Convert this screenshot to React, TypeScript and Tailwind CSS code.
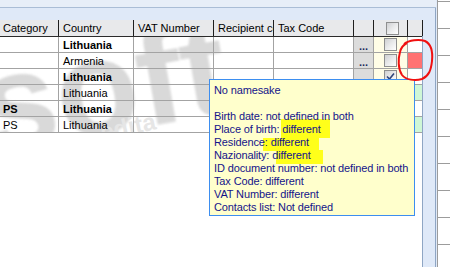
import React from "react"

const cols = [59, 75, 80, 60, 80, 20, 34, 15]

interface Row {
    category: string
    country: string
    bold: boolean
    checked: boolean
    mark: "" | "red" | "green"
}

const rows: Row[] = [
    { category: "", country: "Lithuania", bold: true, checked: false, mark: "" },
    { category: "", country: "Armenia", bold: false, checked: false, mark: "red" },
    { category: "", country: "Lithuania", bold: true, checked: true, mark: "" },
    { category: "", country: "Lithuania", bold: false, checked: true, mark: "green" },
    { category: "PS", country: "Lithuania", bold: true, checked: true, mark: "" },
    { category: "PS", country: "Lithuania", bold: false, checked: true, mark: "green" },
]

const Checkbox = ({ checked }: { checked?: boolean }) => (
    <div className="relative h-[13px] w-[13px] border border-[#8e8f8f] bg-gradient-to-br from-[#cfd0d2] via-[#e9eaeb] to-white">
        {checked && (
            <svg className="absolute left-0 top-0" width="11" height="11" viewBox="0 0 11 11">
                <path d="M2 5.5 L4.5 8 L9 2.5" fill="none" stroke="#31457a" strokeWidth="1.6" />
            </svg>
        )}
    </div>
)

const Tooltip = () => {
    const lines = [
        "No namesake",
        "",
        "Birth date: not defined in both",
        "Place of birth: different",
        "Residence: different",
        "Nazionality: different",
        "ID document number: not defined in both",
        "Tax Code: different",
        "VAT Number: different",
        "Contacts list: Not defined",
    ]
    return (
        <div className="absolute left-[209px] top-[79px] z-20 h-[137px] w-[206px] border border-[#3d8ef0] bg-[#ffffcc] pl-[4px] pt-[4px] tracking-[-0.13px] text-[#14148a]">
            <div className="absolute left-[71px] top-[39px] h-[19px] w-[49px] bg-[#ffff1a]" />
            <div className="absolute left-[53px] top-[58px] h-[13px] w-[56px] bg-[#ffff1a]" />
            <div className="absolute left-[66px] top-[70px] h-[14px] w-[47px] bg-[#ffff1a]" />
            <div className="relative">
                {lines.map((l, i) => (
                    <div key={i} className="h-[13px] whitespace-nowrap leading-[13px]">{l}</div>
                ))}
            </div>
        </div>
    )
}

const App = () => {
    const headers = ["Category", "Country", "VAT Number", "Recipient code", "Tax Code", "", "", ""]

    return (
        <div className="relative flex h-[267px] w-[450px] overflow-hidden bg-white font-['Liberation_Sans',Arial,sans-serif] text-[11px] text-black">
            <div className="flex w-[436px] flex-col bg-[#dfe9f8]">
                <div className="h-[8px] border-b border-[#aabdd6] bg-[#e7eef8]" />
                <div className="flex flex-1 border-r border-[#8fa6c4] pt-[12px]">
                    <div className="relative flex w-[423px] flex-col border-r border-[#8fa6c4] bg-white">
                        {/* header */}
                        <div className="flex h-[17px] border-b border-[#2b2b2b] bg-[#e8e9eb]">
                            {headers.map((h, i) => (
                                <div
                                    key={i}
                                    style={{ width: cols[i] }}
                                    className={`flex shrink-0 items-center overflow-hidden whitespace-nowrap border-r border-[#1e1e1e] ${i === 0 ? "pl-[3px]" : "pl-[4px]"} ${i === 6 ? "justify-center pl-0" : ""}`}
                                >
                                    {i === 6 ? <Checkbox /> : h}
                                </div>
                            ))}
                        </div>

                        {/* body */}
                        <div className="relative overflow-hidden">
                            <div className="pointer-events-none absolute left-[-20px] top-[-18px] -rotate-[10deg] select-none text-[135px] font-bold leading-none text-[#d9d9d9] blur-[0.8px]">
                                soft
                            </div>
                            <div className="pointer-events-none absolute left-[100px] top-[78px] -rotate-[12deg] select-none text-[24px] font-bold leading-none text-[#e6e6e6]">
                                edita
                            </div>
                            {rows.map((r, ri) => (
                                <div key={ri} className="relative flex h-[16px] border-b border-[#a3a3a3]">
                                    <div style={{ width: cols[0] }} className={`flex shrink-0 items-center border-r border-[#a3a3a3] pl-[3px] pt-[1px] ${r.bold ? "font-bold" : ""}`}>
                                        {r.category}
                                    </div>
                                    <div style={{ width: cols[1] }} className={`flex shrink-0 items-center border-r border-[#a3a3a3] pl-[4px] pt-[1px] ${r.bold ? "font-bold" : ""}`}>
                                        {r.country}
                                    </div>
                                    <div style={{ width: cols[2] }} className="shrink-0 border-r border-[#a3a3a3]" />
                                    <div style={{ width: cols[3] }} className="shrink-0 border-r border-[#a3a3a3]" />
                                    <div style={{ width: cols[4] }} className="shrink-0 border-r border-[#a3a3a3]" />
                                    <div style={{ width: cols[5] }} className="flex shrink-0 items-end justify-center border-r border-[#a3a3a3] bg-[#dcdcdc] pb-[1px] text-[11px] font-bold leading-[10px] text-[#1d2a5c]">
                                        ...
                                    </div>
                                    <div style={{ width: cols[6] }} className="flex shrink-0 items-center justify-center border-r border-[#a3a3a3] bg-[#fffde6]">
                                        <Checkbox checked={r.checked} />
                                    </div>
                                    <div style={{ width: cols[7] }} className="shrink-0 p-0">
                                        <div className={`h-full w-full ${r.mark === "red" ? "bg-[#ff7272]" : r.mark === "green" ? "bg-[#cff7d6]" : "bg-white"}`} />
                                    </div>
                                </div>
                            ))}
                        </div>
                    </div>
                    <div className="flex-1" />
                </div>
            </div>
            <div className="w-[1px] bg-[#dfe9f8]" />
            <div className="flex flex-1 flex-col border-l border-[#9c9c9c] pt-[1px]">
                {Array.from({ length: 10 }).map((_, i) => (
                    <div key={i} className="h-[27px] shrink-0 border-t border-[#9c9c9c]" />
                ))}
            </div>

            <Tooltip />

            <svg className="pointer-events-none absolute left-[395px] top-[37px] z-30" width="42" height="46" viewBox="0 0 42 46">
                <path
                    d="M9 7 C14 3, 24 2, 30 4 C36 7, 38 14, 37 24 C36 33, 34 39, 27 42 C20 44, 11 43, 7 38 C3 32, 3 22, 5 15 C6 11, 8 8, 12 6"
                    fill="none"
                    stroke="#f01010"
                    strokeWidth="2"
                />
            </svg>
        </div>
    )
}

export default App
